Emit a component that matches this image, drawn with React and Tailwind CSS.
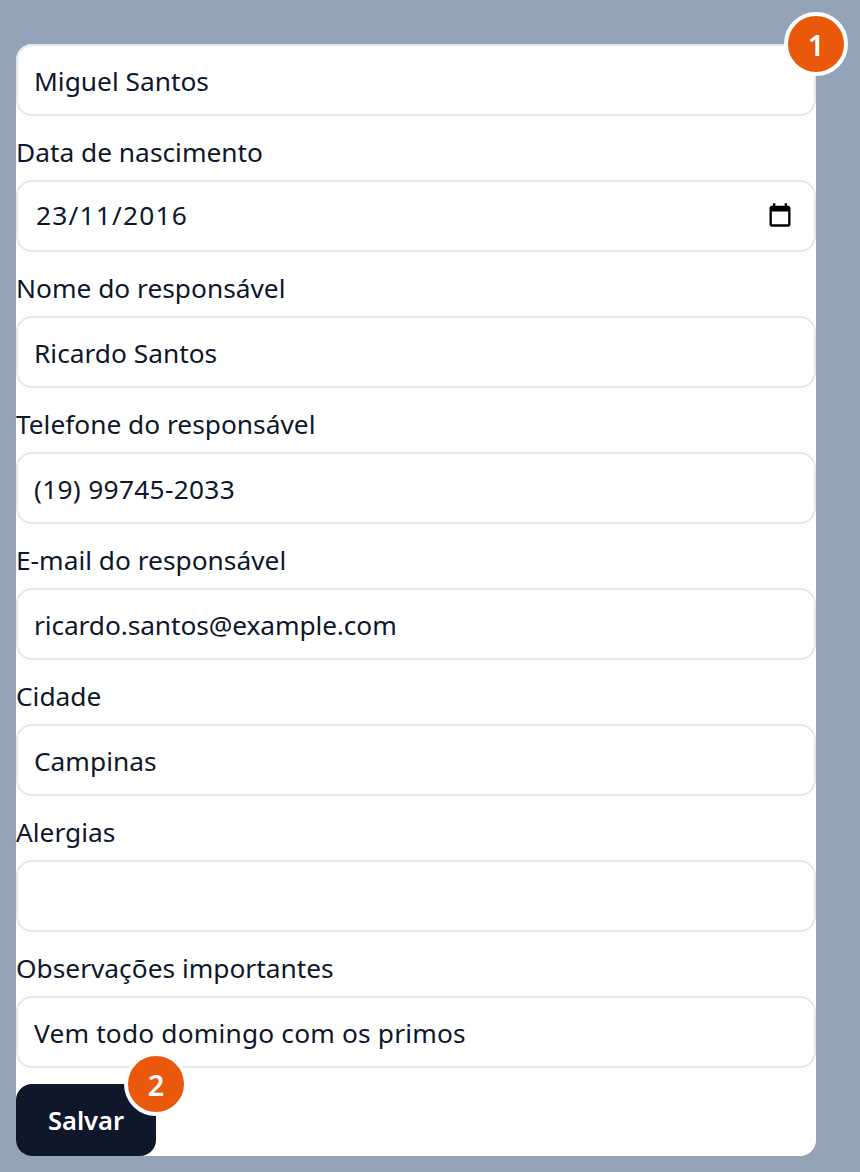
const fields = [
    { label: 'Data de nascimento', value: '23/11/2016', date: true, extra: 'pl-[18px] pb-0.5 tracking-[1.2px]' },
    { label: 'Nome do responsável', value: 'Ricardo Santos', extra: 'pt-0.5' },
    { label: 'Telefone do responsável', value: '(19) 99745-2033', extra: 'pt-0.5 tracking-[0.3px]' },
    { label: 'E-mail do responsável', value: 'ricardo.santos@example.com', extra: 'pt-0.5 tracking-[-0.1px]' },
    { label: 'Cidade', value: 'Campinas', extra: 'pt-0.5' },
    { label: 'Alergias', value: '', extra: '' },
    { label: 'Observações importantes', value: 'Vem todo domingo com os primos', extra: 'pt-0.5 tracking-[0.17px]' },
];

const inputClass = 'block w-full h-[72px] px-4 bg-white border-2 border-[#e2e8f0] rounded-2xl outline-none text-[#0f172a]';

const Badge = ({ children }) => (
    <span className="absolute z-10 top-0 right-0 translate-x-1/2 -translate-y-1/2 flex items-center justify-center w-16 h-16 rounded-full bg-[#ea580c] border-4 border-white text-white font-semibold text-[29px] leading-none">
        {children}
    </span>
);

const CalendarIcon = () => (
    <svg className="absolute right-[22px] top-[21px] text-black" width="28" height="28" viewBox="0 0 24 24" fill="currentColor">
        <path d="M19 4h-1V2h-2v2H8V2H6v2H5c-1.1 0-2 .9-2 2v14c0 1.1.9 2 2 2h14c1.1 0 2-.9 2-2V6c0-1.1-.9-2-2-2zm0 16H5V9h14v11z" />
    </svg>
);

export default function App() {
    return (
        <div className="min-h-[1172px] bg-[#94a3b8] pt-11 pb-4 pl-4 pr-11 font-['Noto_Sans',sans-serif] text-[26.3px] text-[#0f172a]">
            <div className="relative bg-white rounded-2xl">
                <Badge>1</Badge>
                <input className={inputClass + ' pt-0.5'} defaultValue="Miguel Santos" />
                {fields.map((field) => (
                    <div key={field.label} className="mt-4">
                        <label className="block h-10 leading-10 mb-2">{field.label}</label>
                        <div className="relative">
                            <input className={inputClass + ' ' + field.extra} defaultValue={field.value} />
                            {field.date && <CalendarIcon />}
                        </div>
                    </div>
                ))}
                <button className="relative mt-4 block w-[140px] h-[72px] bg-[#0f172a] text-white text-[25.5px] font-semibold rounded-2xl">
                    Salvar
                    <Badge>2</Badge>
                </button>
            </div>
        </div>
    );
}
